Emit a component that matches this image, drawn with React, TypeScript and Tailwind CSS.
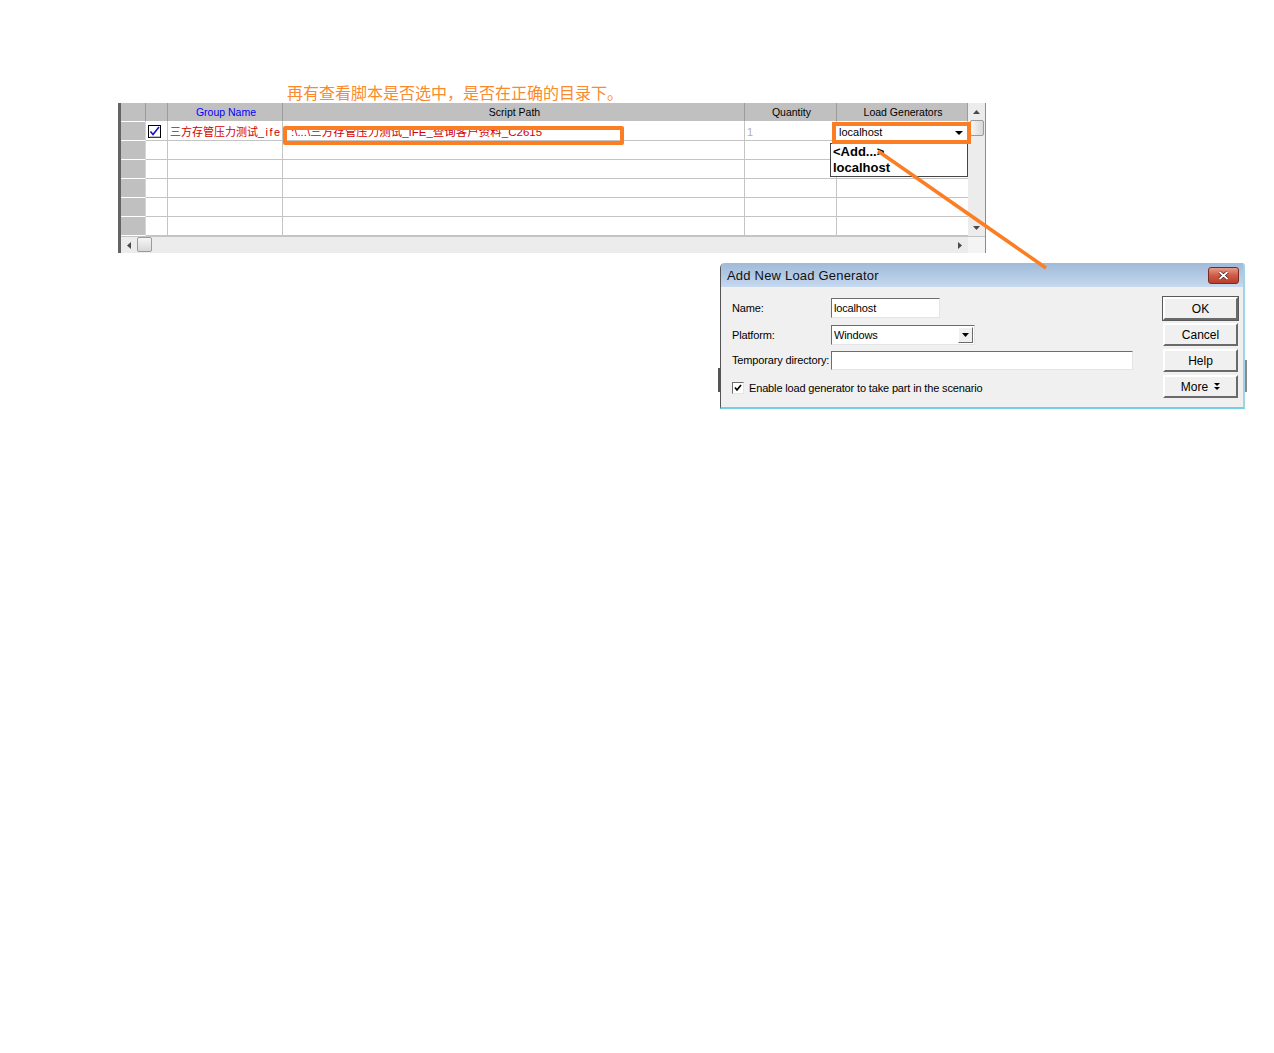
import { useState } from "react";

const cols = [
  { key: "rh", width: "w-[25px]" },
  { key: "chk", width: "w-[22px]" },
  { key: "group", width: "w-[115px]" },
  { key: "script", width: "w-[462px]" },
  { key: "qty", width: "w-[92px]" },
  { key: "lg", width: "w-[131px]" },
];

const headers: Record<string, string> = {
  rh: "",
  chk: "",
  group: "Group Name",
  script: "Script Path",
  qty: "Quantity",
  lg: "Load Generators",
};

const Arrow = ({ dir }: { dir: "up" | "down" | "left" | "right" }) => {
  const pts = {
    up: "0,4 3.5,0 7,4",
    down: "0,0 3.5,4 7,0",
    left: "4,0 0,3.5 4,7",
    right: "0,0 4,3.5 0,7",
  }[dir];
  const size = dir === "up" || dir === "down" ? { w: 7, h: 4 } : { w: 4, h: 7 };
  return (
    <svg width={size.w} height={size.h} viewBox={`0 0 ${size.w} ${size.h}`}>
      <polygon points={pts} fill="#4a4a4a" />
    </svg>
  );
};

const CheckedBox = () => (
  <svg width="13" height="13" viewBox="0 0 13 13">
    <rect x="0.5" y="0.5" width="12" height="12" fill="white" stroke="#000" />
    <rect x="2" y="11.5" width="10" height="1" fill="#808080" />
    <path d="M2.5 6.5 L5 9.5 L11 2" stroke="#1010d0" strokeWidth="1.6" fill="none" />
  </svg>
);

const GridTable = () => {
  const rows = [0, 1, 2, 3, 4, 5];
  return (
    <div className="ml-[118px] flex w-[868px] h-[150px]">
      <div className="w-[3px] bg-[#646464]" />
      <div className="flex flex-col w-[864px]">
        <div className="flex h-[133px]">
          <div className="flex flex-col w-[847px]">
            {/* header */}
            <div className="flex h-[19px]">
              {cols.map((c) => (
                <div
                  key={c.key}
                  className={`${c.width} h-full bg-[#c0c0c0] border-r border-b border-r-[#9c9c9c] border-b-white flex items-center justify-center text-[10.5px] pl-[2px] pt-[2px] ${
                    c.key === "group" ? "text-[#0000ff]" : "text-black"
                  }`}
                >
                  {headers[c.key]}
                </div>
              ))}
            </div>
            {rows.map((r) => (
              <div key={r} className="flex h-[19px]">
                <div className="w-[25px] h-full bg-[#c0c0c0] border-r border-b border-r-[#d6d6d6] border-b-white" />
                <div className="w-[22px] h-full border-r border-b border-[#c4c4c4] flex items-center pl-[2px]">
                  {r === 0 && <CheckedBox />}
                </div>
                <div className="w-[115px] h-full border-r border-b border-[#c4c4c4] overflow-hidden whitespace-nowrap text-[11px] leading-[20px] pl-[2px] text-[#d40000]">
                  {r === 0 ? (
                    <>
                      三方存管压力测试<span className="tracking-[1.5px]">_ife</span>
                    </>
                  ) : (
                    ""
                  )}
                </div>
                <div className="w-[462px] h-full border-r border-b border-[#c4c4c4] overflow-hidden whitespace-nowrap text-[11.5px] leading-[20px] pl-[8px] text-[#d40000]">
                  {r === 0 ? ":\\...\\三方存管压力测试_IFE_查询客户资料_C2615" : ""}
                </div>
                <div className="w-[92px] h-full border-r border-b border-[#c4c4c4] text-[11px] leading-[20px] pl-[2px] text-[#b0b0b0]">
                  {r === 0 ? "1" : ""}
                </div>
                <div className="w-[131px] h-full border-b border-[#c4c4c4]" />
              </div>
            ))}
          </div>
          {/* vertical scrollbar */}
          <div className="w-[17px] h-full bg-[#ececec] flex flex-col items-center">
            <div className="h-[17px] flex items-center justify-center">
              <Arrow dir="up" />
            </div>
            <div className="w-[14px] h-[16px] rounded-[2px] border border-[#9a9a9a] bg-gradient-to-r from-[#f6f6f6] to-[#d8d8d8]" />
            <div className="flex-1" />
            <div className="h-[17px] flex items-center justify-center">
              <Arrow dir="down" />
            </div>
          </div>
        </div>
        {/* horizontal scrollbar */}
        <div className="h-[17px] flex bg-[#ececec] border-t border-[#c4c4c4]">
          <div className="w-[16px] flex items-center justify-center">
            <Arrow dir="left" />
          </div>
          <div className="w-[15px] h-[15px] rounded-[2px] border border-[#9a9a9a] bg-gradient-to-b from-[#f6f6f6] to-[#d8d8d8]" />
          <div className="flex-1" />
          <div className="w-[16px] flex items-center justify-center">
            <Arrow dir="right" />
          </div>
          <div className="w-[17px] bg-[#f4f4f4]" />
        </div>
      </div>
      <div className="w-[1px] bg-[#8c8c8c]" />
    </div>
  );
};

const Sunken = ({ className, children }: { className: string; children?: React.ReactNode }) => (
  <div
    className={`${className} bg-white border border-t-[#6d6d6d] border-l-[#6d6d6d] border-b-[#e4e4e4] border-r-[#e4e4e4] text-[11px] leading-[16px] pl-[2px] flex items-center`}
  >
    {children}
  </div>
);

const WinButton = ({ label, primary }: { label: string; primary?: boolean }) => (
  <div
    className={`w-[75px] h-[23px] bg-[#f0f0f0] flex items-center justify-center text-[12px] text-black border-2 border-t-white border-l-white border-b-[#6a6a6a] border-r-[#6a6a6a] ${
      primary ? "outline outline-1 outline-[#5a5a5a]" : ""
    }`}
  >
    {label}
  </div>
);

const Dialog = () => {
  const [enabled, setEnabled] = useState(true);
  return (
    <div className="absolute left-[720px] top-[263px] w-[525px] h-[146px] flex flex-col bg-[#f0f0f0] border-l border-l-[#555] border-r-2 border-r-[#9fd3e6] border-b-2 border-b-[#6fd0e8] rounded-tl-[5px] rounded-tr-[3px]">
      <div className="h-[24px] flex items-center justify-between pl-[6px] pr-[4px] rounded-tl-[5px] bg-gradient-to-b from-[#9fbad8] to-[#c6d9ef]">
        <span className="text-[13px] tracking-[0.2px] text-[#111] pt-[1px]">Add New Load Generator</span>
        <div className="w-[31px] h-[17px] rounded-[3px] border border-[#7c2a1e] bg-gradient-to-b from-[#e59a8a] via-[#cf5a45] to-[#b7402c] flex items-center justify-center">
          <svg width="11" height="9" viewBox="0 0 11 9">
            <path d="M1.5 1 L9.5 8 M9.5 1 L1.5 8" stroke="#3a1a14" strokeWidth="3.2" />
            <path d="M1.5 1 L9.5 8 M9.5 1 L1.5 8" stroke="#fff" strokeWidth="1.8" />
          </svg>
        </div>
      </div>
      <div className="flex flex-1 pl-[11px] pr-[5px]">
        <div className="flex-1 flex flex-col pt-[11px] text-[11px] tracking-[-0.15px] text-black">
          <div className="flex items-center h-[20px]">
            <span className="w-[99px]">Name:</span>
            <Sunken className="w-[109px] h-[20px]">localhost</Sunken>
          </div>
          <div className="flex items-center h-[20px] mt-[7px]">
            <span className="w-[99px]">Platform:</span>
            <Sunken className="w-[144px] h-[20px] justify-between pr-[1px]">
              <span>Windows</span>
              <div className="w-[15px] h-[16px] bg-[#f0f0f0] border border-t-white border-l-white border-b-[#6a6a6a] border-r-[#6a6a6a] flex items-center justify-center">
                <svg width="7" height="4" viewBox="0 0 7 4">
                  <polygon points="0,0 3.5,4 7,0" fill="#000" />
                </svg>
              </div>
            </Sunken>
          </div>
          <div className="flex items-center h-[19px] mt-[6px]">
            <span className="w-[99px] whitespace-nowrap">Temporary directory:</span>
            <Sunken className="w-[302px] h-[19px]" />
          </div>
          <label className="flex items-center mt-[10px] cursor-pointer" onClick={() => setEnabled(!enabled)}>
            <div className="w-[12px] h-[12px] bg-white border border-t-[#6d6d6d] border-l-[#6d6d6d] border-b-[#e4e4e4] border-r-[#e4e4e4] flex items-center justify-center">
              {enabled && (
                <svg width="8" height="8" viewBox="0 0 8 8">
                  <path d="M1 3.5 L3 6 L7 1" stroke="#000" strokeWidth="1.7" fill="none" />
                </svg>
              )}
            </div>
            <span className="ml-[5px]">Enable load generator to take part in the scenario</span>
          </label>
        </div>
        <div className="flex flex-col gap-[3px] pt-[10px]">
          <WinButton label="OK" primary />
          <WinButton label="Cancel" />
          <WinButton label="Help" />
          <div className="w-[75px] h-[23px] bg-[#f0f0f0] flex items-center justify-center gap-[6px] text-[12px] border-2 border-t-white border-l-white border-b-[#6a6a6a] border-r-[#6a6a6a]">
            <span>More</span>
            <svg width="6" height="7" viewBox="0 0 6 7">
              <polygon points="0,0 6,0 3,3" fill="#000" />
              <polygon points="0,4 6,4 3,7" fill="#000" />
            </svg>
          </div>
        </div>
      </div>
    </div>
  );
};

export default function App() {
  return (
    <div className="relative w-[1274px] h-[1053px] bg-white overflow-hidden font-['Liberation_Sans','Noto_Sans_CJK_SC',sans-serif]">
      {/* annotation */}
      <div className="pl-[287px] pt-[82px] h-[103px] text-[16px] leading-[20px] text-[#fa8a2c] font-['Noto_Sans_CJK_SC',sans-serif]">
        再有查看脚本是否选中，是否在正确的目录下。
      </div>

      <GridTable />

      {/* combo in Load Generators cell + dropdown list */}
      <div className="absolute left-[836px] top-[124px] w-[130px] h-[17px] bg-white flex items-center justify-between pl-[3px] pr-[3px] text-[11px]">
        <span>localhost</span>
        <svg width="8" height="4" viewBox="0 0 8 4">
          <polygon points="0,0 4,4 8,0" fill="#000" />
        </svg>
      </div>
      <div className="absolute left-[830px] top-[143px] w-[138px] h-[34px] bg-white border border-[#444] flex flex-col pl-[2px] text-[13px] font-bold leading-[16px] text-black">
        <span>&lt;Add...&gt;</span>
        <span>localhost</span>
      </div>

      {/* orange highlight boxes */}
      <div className="absolute left-[283px] top-[126px] w-[341px] h-[19px] border-4 border-[#fb7e25] rounded-[2px]" />
      <div className="absolute left-[832px] top-[122px] w-[139px] h-[22px] border-4 border-[#fb7e25]" />

      {/* edges of the window behind the dialog */}
      <div className="absolute left-[718px] top-[368px] w-[2px] h-[24px] bg-[#555]" />
      <div className="absolute left-[1245px] top-[360px] w-[2px] h-[32px] bg-[#8a8a8a]" />

      <Dialog />

      {/* orange connector line */}
      <svg className="absolute left-0 top-0 pointer-events-none" width="1274" height="1053">
        <line x1="878" y1="151" x2="1046" y2="268" stroke="#fb7e25" strokeWidth="3.5" />
      </svg>
    </div>
  );
}
